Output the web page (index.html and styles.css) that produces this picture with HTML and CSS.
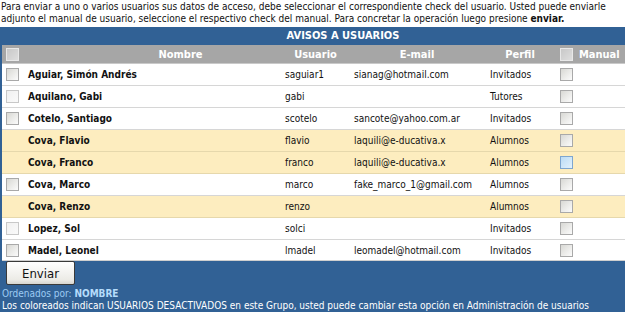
FILE: index.html
```html
<!DOCTYPE html>
<html>
<head>
<meta charset="utf-8">
<link rel="stylesheet" href="styles.css">
</head>
<body>
<p class="intro">Para enviar a uno o varios usuarios sus datos de acceso, debe seleccionar el correspondiente check del usuario. Usted puede enviarle adjunto el manual de usuario, seleccione el respectivo check del manual. Para concretar la operación luego presione <b>enviar.</b></p>
<div class="frame">
  <div class="panel">
    <div class="title">AVISOS A USUARIOS</div>
    <div class="row head">
      <span class="c-cb"><span class="cb cb-head"></span></span>
      <span class="c-name">Nombre</span>
      <span class="c-user">Usuario</span>
      <span class="c-mail">E-mail</span>
      <span class="c-perfil">Perfil</span>
      <span class="c-man"><span class="cb cb-head"></span><span class="man-label">Manual</span></span>
    </div>
    <div class="row">
      <span class="c-cb"><span class="cb"></span></span>
      <span class="c-name">Aguiar, Simón Andrés</span>
      <span class="c-user">saguiar1</span>
      <span class="c-mail">sianag@hotmail.com</span>
      <span class="c-perfil">Invitados</span>
      <span class="c-man"><span class="cb"></span></span>
    </div>
    <div class="row">
      <span class="c-cb"><span class="cb cb-plain"></span></span>
      <span class="c-name">Aquilano, Gabi</span>
      <span class="c-user">gabi</span>
      <span class="c-mail"></span>
      <span class="c-perfil">Tutores</span>
      <span class="c-man"><span class="cb"></span></span>
    </div>
    <div class="row">
      <span class="c-cb"><span class="cb"></span></span>
      <span class="c-name">Cotelo, Santiago</span>
      <span class="c-user">scotelo</span>
      <span class="c-mail">sancote@yahoo.com.ar</span>
      <span class="c-perfil">Invitados</span>
      <span class="c-man"><span class="cb"></span></span>
    </div>
    <div class="row off">
      <span class="c-cb"></span>
      <span class="c-name">Cova, Flavio</span>
      <span class="c-user">flavio</span>
      <span class="c-mail">laquili@e-ducativa.x</span>
      <span class="c-perfil">Alumnos</span>
      <span class="c-man"><span class="cb"></span></span>
    </div>
    <div class="row off">
      <span class="c-cb"></span>
      <span class="c-name">Cova, Franco</span>
      <span class="c-user">franco</span>
      <span class="c-mail">laquili@e-ducativa.x</span>
      <span class="c-perfil">Alumnos</span>
      <span class="c-man"><span class="cb cb-hover"></span></span>
    </div>
    <div class="row">
      <span class="c-cb"><span class="cb"></span></span>
      <span class="c-name">Cova, Marco</span>
      <span class="c-user">marco</span>
      <span class="c-mail">fake_marco_1@gmail.com</span>
      <span class="c-perfil">Alumnos</span>
      <span class="c-man"><span class="cb"></span></span>
    </div>
    <div class="row off">
      <span class="c-cb"></span>
      <span class="c-name">Cova, Renzo</span>
      <span class="c-user">renzo</span>
      <span class="c-mail"></span>
      <span class="c-perfil">Alumnos</span>
      <span class="c-man"><span class="cb"></span></span>
    </div>
    <div class="row">
      <span class="c-cb"><span class="cb cb-plain"></span></span>
      <span class="c-name">Lopez, Sol</span>
      <span class="c-user">solci</span>
      <span class="c-mail"></span>
      <span class="c-perfil">Invitados</span>
      <span class="c-man"><span class="cb"></span></span>
    </div>
    <div class="row last">
      <span class="c-cb"><span class="cb"></span></span>
      <span class="c-name">Madel, Leonel</span>
      <span class="c-user">lmadel</span>
      <span class="c-mail">leomadel@hotmail.com</span>
      <span class="c-perfil">Invitados</span>
      <span class="c-man"><span class="cb"></span></span>
    </div>
    <div class="actions">
      <button class="btn" type="button">Enviar</button>
    </div>
    <div class="order">Ordenados por: <b>NOMBRE</b></div>
    <div class="note">Los coloreados indican USUARIOS DESACTIVADOS en este Grupo, usted puede cambiar esta opción en Administración de usuarios</div>
  </div>
</div>
</body>
</html>
```

FILE: styles.css
```css
html, body {
  margin: 0;
  padding: 0;
  overflow: hidden;
  background: #ffffff;
}
body {
  font-family: "DejaVu Sans Condensed", "DejaVu Sans", sans-serif;
  font-size: 10px;
  color: #111;
}
.intro {
  margin: 0;
  padding: 1px 0 0 1px;
  line-height: 12px;
  height: 26px;
}
.frame {
  width: 100%;
  overflow: hidden;
}
.panel {
  width: 686px;
  background: #316195;
  padding: 0 2px 40px 2px;
  box-sizing: border-box;
  min-height: 300px;
}
.title {
  height: 18px;
  line-height: 18px;
  text-align: center;
  color: #fff;
  font-weight: bold;
  font-size: 11px;
}
.row {
  display: grid;
  grid-template-columns: 22px 257px 69px 134px 72px 1fr;
  height: 21px;
  align-items: center;
  background: #fff;
  border-bottom: 1px solid #d6d6d6;
}
.row.last {
  height: 20px;
  border-bottom-color: #cfcfcf;
}
.row.off {
  background: #fdedbf;
  border-bottom-color: #e6d8ac;
}
.row.head {
  background: #a6a6a6;
  color: #fff;
  font-weight: bold;
  font-size: 11px;
  height: 18px;
  border-bottom: 1px solid #c9c9c9;
  text-align: center;
}
.row.head .c-man { text-align: left; }
.c-cb { padding-left: 4px; display: flex; align-items: center; }
.c-name { font-weight: bold; padding-left: 4px; }
.head .c-name { padding-left: 56px; }
.c-user { padding-left: 4px; }
.c-mail { padding-left: 4px; }
.c-perfil { padding-left: 6px; }
.head .c-user, .head .c-mail, .head .c-perfil { padding-left: 0; }
.c-man { display: flex; align-items: center; padding-left: 4px; }
.man-label { margin-left: 6px; }
.cb {
  display: inline-block;
  width: 11px;
  height: 11px;
  border: 1px solid #a9a9a9;
  background: linear-gradient(135deg, #d8d8d4 0%, #eeeeec 60%, #fbfbfb 100%);
}
.cb-plain {
  border-color: #c8c8c8;
  background: linear-gradient(135deg, #f0f0f0 0%, #fafafa 100%);
}
.cb-hover {
  border-color: #7ea6cf;
  background: linear-gradient(135deg, #bcdcf5 0%, #e2f1fc 100%);
}
.cb-head {
  border-color: #e8e8e8;
  background: linear-gradient(135deg, #c8c8c8 0%, #dedede 100%);
}
.actions {
  padding: 0 0 0 4px;
  height: 24px;
}
.btn {
  font-family: "DejaVu Sans Condensed", "DejaVu Sans", sans-serif;
  font-size: 13px;
  width: 69px;
  height: 24px;
  padding: 0;
  color: #111;
  border: 1px solid #3a3a3a;
  border-radius: 2px;
  background: linear-gradient(#ffffff, #ecebe6 80%, #d6d5cf);
}
.order {
  color: #9ccbf3;
  margin-top: 3px;
  line-height: 12px;
}
.order b { color: #b5dcfb; }
.note {
  color: #fff;
  line-height: 12px;
}
```
